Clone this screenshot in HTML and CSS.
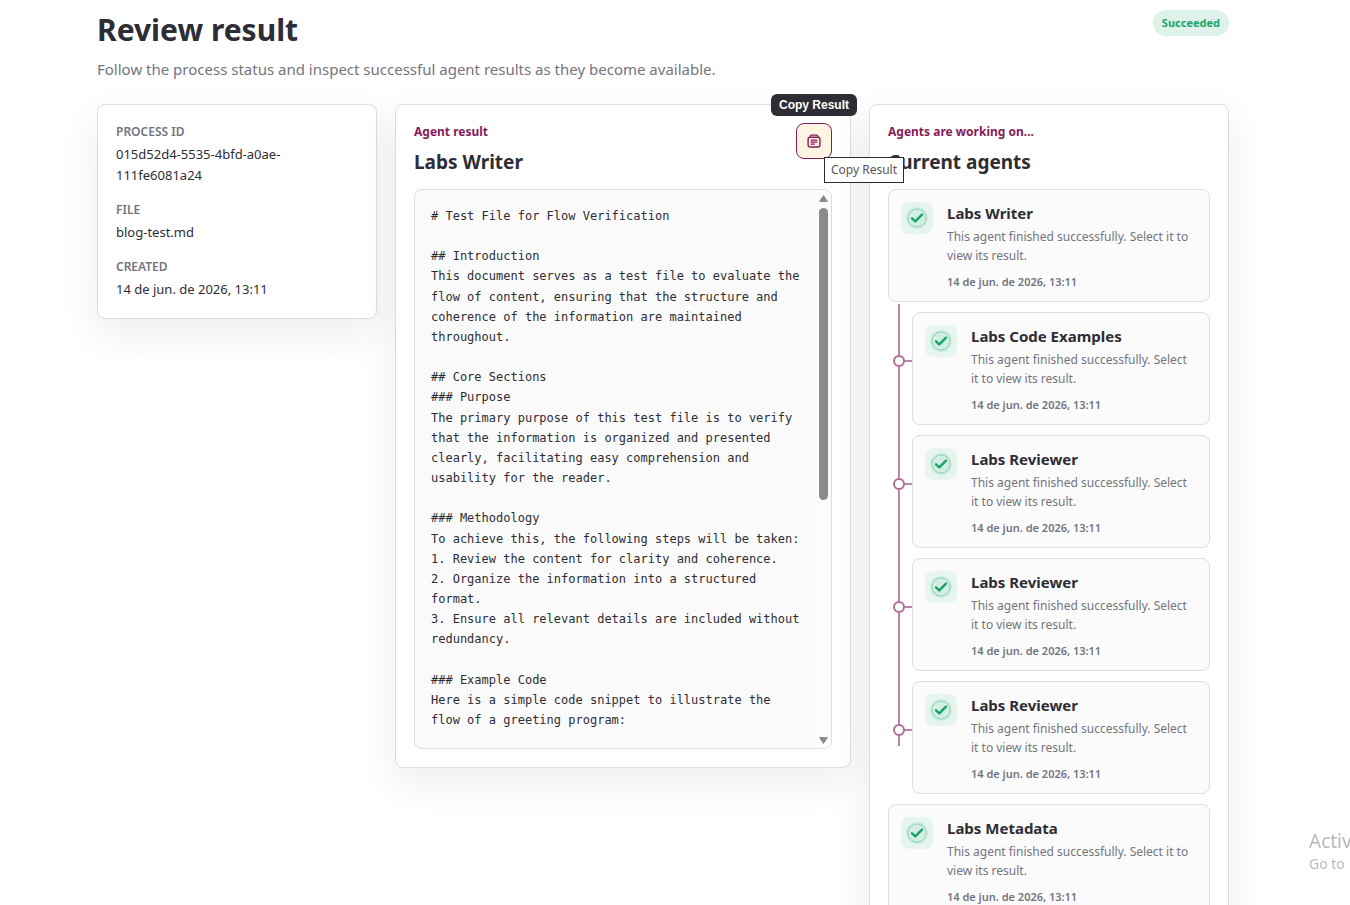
FILE: index.html
```html
<!DOCTYPE html>
<html lang="en">
<head>
<meta charset="utf-8">
<title>Review result</title>
<link rel="stylesheet" href="styles.css">
</head>
<body>
<svg class="sprite" aria-hidden="true">
  <symbol id="check" viewBox="0 0 32 32">
    <circle cx="16" cy="16" r="11" fill="#ccecdf"/>
    <circle cx="16" cy="16" r="9" fill="#d3efe4" stroke="#8fd0b6"/>
    <path d="M11 16.3 14.3 19.3 21 12.7" fill="none" stroke="#16a36a" stroke-width="2.4" stroke-linecap="round" stroke-linejoin="round"/>
  </symbol>
</svg>
<main class="page">
  <header class="head">
    <div>
      <h1 class="title">Review result</h1>
      <p class="lead">Follow the process status and inspect successful agent results as they become available.</p>
    </div>
    <span class="status">Succeeded</span>
  </header>
  <div class="columns">
    <section class="card">
      <dl class="facts">
        <div><dt>Process ID</dt><dd>015d52d4-5535-4bfd-a0ae-111fe6081a24</dd></div>
        <div><dt>File</dt><dd>blog-test.md</dd></div>
        <div><dt>Created</dt><dd>14 de jun. de 2026, 13:11</dd></div>
      </dl>
    </section>
    <section class="card">
      <div class="panel-head">
        <div>
          <p class="eyebrow">Agent result</p>
          <h2 class="subtitle">Labs Writer</h2>
        </div>
        <div class="copy-wrap">
          <button class="copy" type="button" aria-label="Copy Result">
            <svg width="14" height="14" viewBox="0 0 14 14" fill="none" stroke="#871b59" stroke-linecap="round">
              <path d="M3 3.2C3 1.6 3.6 1.1 4.8 1.1H9.2C10.4 1.1 11 1.6 11 3.2" stroke-width="1.2"/>
              <rect x="1.1" y="3.2" width="11.8" height="9.8" rx="2" stroke-width="1.4"/>
              <path d="M4 6.1H10M4 8.1H10M4 10.1H7.5" stroke-width="1.1"/>
            </svg>
          </button>
          <span class="tip">Copy Result</span>
          <span class="native-tip">Copy Result</span>
        </div>
      </div>
      <div class="viewer">
<pre class="result"># Test File for Flow Verification

## Introduction
This document serves as a test file to evaluate the flow of content, ensuring that the structure and coherence of the information are maintained throughout.

## Core Sections
### Purpose
The primary purpose of this test file is to verify that the information is organized and presented clearly, facilitating easy comprehension and usability for the reader.

### Methodology
To achieve this, the following steps will be taken:
1. Review the content for clarity and coherence.
2. Organize the information into a structured format.
3. Ensure all relevant details are included without redundancy.

### Example Code
Here is a simple code snippet to illustrate the flow of a greeting program:
</pre>
        <div class="bar" aria-hidden="true">
          <svg width="9" height="7" viewBox="0 0 9 7"><path d="M4.5 .6 8.4 6.4H.6Z" fill="#8b8b8b" stroke="#8b8b8b" stroke-linejoin="round"/></svg>
          <span class="track"><span class="thumb"></span></span>
          <svg width="9" height="7" viewBox="0 0 9 7"><path d="M4.5 6.4 8.4 .6H.6Z" fill="#8b8b8b" stroke="#8b8b8b" stroke-linejoin="round"/></svg>
        </div>
      </div>
    </section>
    <section class="card">
      <p class="eyebrow">Agents are working on...</p>
      <h2 class="subtitle">Current agents</h2>
      <div class="agents">
        <button class="agent" type="button"><svg class="badge"><use href="#check"/></svg><span class="info"><strong>Labs Writer</strong><span class="desc">This agent finished successfully. Select it to view its result.</span><time>14 de jun. de 2026, 13:11</time></span></button>
        <div class="branch">
          <div class="node"><button class="agent" type="button"><svg class="badge"><use href="#check"/></svg><span class="info"><strong>Labs Code Examples</strong><span class="desc">This agent finished successfully. Select it to view its result.</span><time>14 de jun. de 2026, 13:11</time></span></button></div>
          <div class="node"><button class="agent" type="button"><svg class="badge"><use href="#check"/></svg><span class="info"><strong>Labs Reviewer</strong><span class="desc">This agent finished successfully. Select it to view its result.</span><time>14 de jun. de 2026, 13:11</time></span></button></div>
          <div class="node"><button class="agent" type="button"><svg class="badge"><use href="#check"/></svg><span class="info"><strong>Labs Reviewer</strong><span class="desc">This agent finished successfully. Select it to view its result.</span><time>14 de jun. de 2026, 13:11</time></span></button></div>
          <div class="node"><button class="agent" type="button"><svg class="badge"><use href="#check"/></svg><span class="info"><strong>Labs Reviewer</strong><span class="desc">This agent finished successfully. Select it to view its result.</span><time>14 de jun. de 2026, 13:11</time></span></button></div>
        </div>
        <button class="agent" type="button"><svg class="badge"><use href="#check"/></svg><span class="info"><strong>Labs Metadata</strong><span class="desc">This agent finished successfully. Select it to view its result.</span><time>14 de jun. de 2026, 13:11</time></span></button>
      </div>
    </section>
  </div>
</main>
<aside class="watermark"><span class="watermark-title">Activ</span><span>Go to</span></aside>
</body>
</html>
```
FILE: styles.css
```css
*, *::before, *::after { box-sizing: border-box; }
html { overflow: hidden; }
body {
  margin: 0;
  padding: 0 24px 0 0;
  background: #fff;
  color: #2e2d35;
  font-family: "Segoe UI", "Noto Sans", sans-serif;
  font-size: 13px;
}
h1, h2, p, dl, dd, pre { margin: 0; }
.sprite { position: absolute; width: 0; height: 0; }
.page { max-width: 1132px; margin: 0 auto; padding: 10px 0 24px; }
.head { display: flex; justify-content: space-between; align-items: flex-start; margin-bottom: 24px; }
.title { font-size: 30px; line-height: 40px; }
.lead { margin-top: 8px; font-size: 15px; line-height: 22px; color: #74747e; }
.status {
  padding: 4px 9px;
  border-radius: 13px;
  background: #def2e9;
  color: #1aa56c;
  font-size: 11px;
  font-weight: 700;
  line-height: 18px;
}
.columns { display: grid; grid-template-columns: 280px minmax(0, 1fr) 360px; gap: 18px; align-items: start; }
.card {
  padding: 18px;
  border: 1px solid #dcdce2;
  border-radius: 8px;
  background: #fff;
  box-shadow: 0 14px 40px rgba(30, 30, 40, 0.08);
}
.facts { display: grid; gap: 15px; }
.facts dt { color: #74747e; font-size: 12px; font-weight: 600; line-height: 18px; text-transform: uppercase; }
.facts dd { margin-top: 3px; line-height: 21px; overflow-wrap: anywhere; }
.panel-head { display: flex; justify-content: space-between; align-items: flex-start; }
.eyebrow { color: #871b59; font-size: 12px; font-weight: 700; line-height: 18px; }
.subtitle { margin: 7px 0 13px; font-size: 19px; line-height: 28px; }
.copy-wrap { position: relative; }
.copy {
  display: grid;
  place-items: center;
  width: 36px;
  height: 36px;
  padding: 0;
  border: 1px solid #871b59;
  border-radius: 8px;
  background: #fff3e2;
}
.tip {
  position: absolute;
  right: -25px;
  bottom: 43px;
  padding: 3px 8px;
  border-radius: 6px;
  background: #2e2d35;
  color: #fff;
  font: 700 12px/16px "Liberation Sans", sans-serif;
  white-space: nowrap;
}
.native-tip {
  position: absolute;
  left: 28px;
  top: 34px;
  z-index: 2;
  padding: 3px 6px;
  border: 1px solid #2b2b2b;
  background: #fff;
  color: #575757;
  font-size: 12px;
  line-height: 18px;
  white-space: nowrap;
}
.viewer {
  position: relative;
  height: 560px;
  overflow: hidden;
  border: 1px solid #dcdce2;
  border-radius: 8px;
  background: #fafafa;
}
.result {
  padding: 16px 28px 16px 16px;
  font-family: Consolas, "DejaVu Sans Mono", monospace;
  font-size: 12px;
  line-height: 1.68;
  white-space: pre-wrap;
}
.bar {
  position: absolute;
  top: 0;
  right: 0;
  bottom: 0;
  display: flex;
  flex-direction: column;
  align-items: center;
  gap: 6px;
  width: 15px;
  padding: 5px 0 4px;
  background: #fcfcfc;
}
.track { flex: 1; width: 9px; }
.thumb { display: block; height: 292px; border-radius: 5px; background: #8b8b8b; }
.agents, .branch { display: grid; gap: 10px; }
.agent {
  display: flex;
  align-items: flex-start;
  gap: 14px;
  width: 100%;
  padding: 12px 12px 11px;
  border: 1px solid #dcdce2;
  border-radius: 8px;
  background: #fbfbfb;
  color: inherit;
  font: inherit;
  text-align: left;
}
.badge { flex: none; width: 32px; height: 32px; border-radius: 8px; background: #e6f6ef; }
.info { display: flex; flex: 1; flex-direction: column; }
.info strong { font-size: 15px; line-height: 22px; }
.desc { margin: 3px 0 9px; color: #74747e; font-size: 12px; line-height: 19px; }
.info time { color: #74747e; font-size: 11px; font-weight: 600; line-height: 16px; }
.branch { position: relative; padding-left: 24px; }
.branch::before {
  content: "";
  position: absolute;
  left: 10px;
  top: -8px;
  bottom: 48px;
  width: 2px;
  background: #b987a9;
}
.node { position: relative; }
.node::before {
  content: "";
  position: absolute;
  left: -14px;
  top: 48px;
  width: 14px;
  height: 2px;
  background: #b987a9;
}
.node::after {
  content: "";
  position: absolute;
  left: -19px;
  top: 43px;
  width: 12px;
  height: 12px;
  border: 2px solid #b06e97;
  border-radius: 50%;
  background: #fff;
}
.watermark {
  position: fixed;
  left: calc(100% - 41px);
  bottom: 31px;
  display: grid;
  color: #b9b9b9;
  font-size: 14px;
  line-height: 20px;
  white-space: nowrap;
}
.watermark-title { font-size: 19px; line-height: 26px; }
```
